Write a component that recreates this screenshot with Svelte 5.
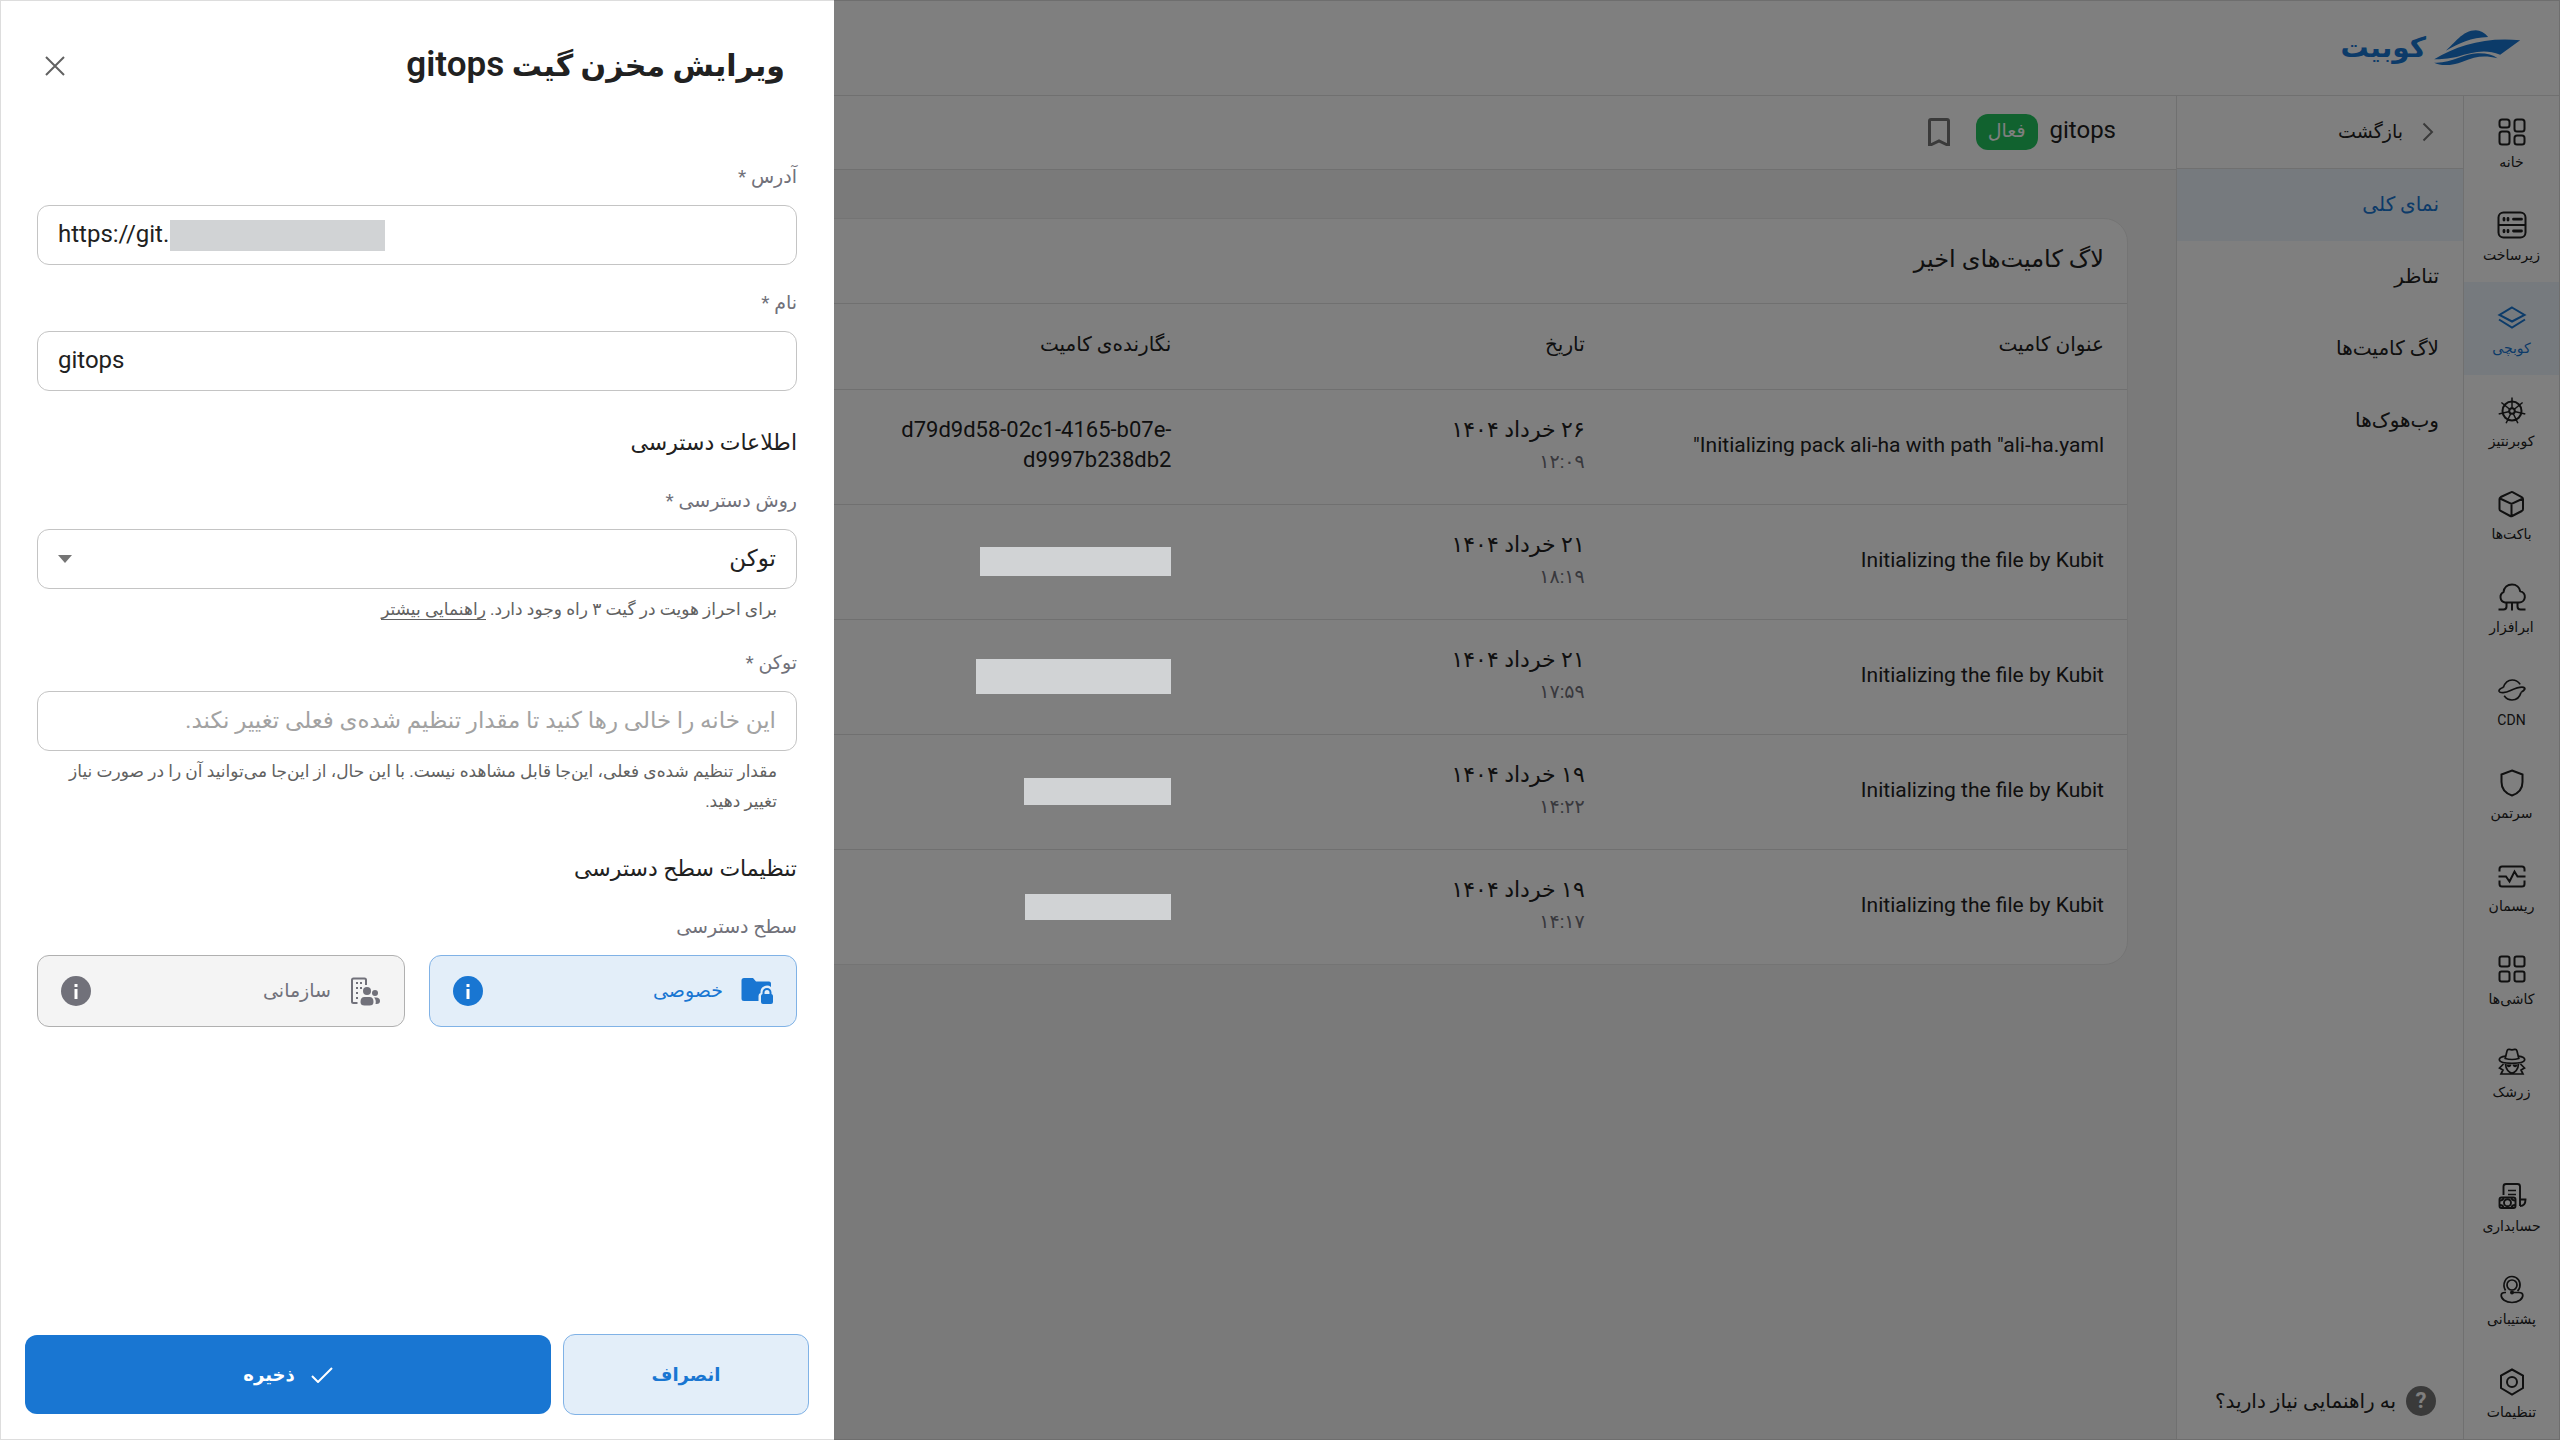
<script>
  const rail = [
    { label: 'خانه', icon: '<rect x="2.5" y="2.5" width="10" height="8" rx="2.5"/><rect x="17.5" y="2.5" width="10" height="12" rx="2.5"/><rect x="2.5" y="14.5" width="10" height="13" rx="2.5"/><rect x="17.5" y="18.5" width="10" height="9" rx="2.5"/>' },
    { label: 'زیرساخت', icon: '<rect x="1.5" y="2.5" width="27" height="25" rx="5"/><path d="M1.5 15h27"/><g stroke-linecap="round"><path d="M7 8.5v1.5M11 8.5v1.5M16.500 9.200h8M7 20.300v1.500M11 20.300v1.500M16.500 21h8" stroke-width="2.800"/></g>' },
    { label: 'کوبچی', active: true, icon: '<path d="M15 4.500 27.500 12 15 18.500 2.500 12zM2 16.500l13 8 13-8"/>' },
    { label: 'کوبرنتیز', icon: '<circle cx="15" cy="15" r="9.500"/><circle cx="15" cy="15" r="2.800"/><path stroke-width="1.500" d="M15 12.500V1.500M17 13.500l8.600-7M17.500 15.600l10.800 2.500M16.100 17.300l4.800 10M13.900 17.300l-4.800 10M12.500 15.600 1.700 18.100M13 13.500 4.400 6.500"/>' },
    { label: 'باکت‌ها', icon: '<path d="M14.300 3.200 3.800 8Q2.500 8.800 2.500 10v10q0 1.300 1.200 2l9.500 5q1 .5 2 0l9.600-5q1.200-.700 1.200-2V10q0-1.200-1.300-2L15.500 3.200q-.6-.3-1.200 0zM3 9.500 14.500 15 26 9.500M14.500 15v12"/>' },
    { label: 'ابرافزار', icon: '<path stroke-linejoin="round" d="M8 20.500a5.500 5.500 0 0 1-1.500-10.300C7 5.500 10.500 2.500 15 2.500s7.500 3 8.200 6.700A5.700 5.700 0 0 1 22 20.500zM15 20.500v8M9.500 20.500v4q0 3-3 3H1.500M20.500 20.500v4q0 3 3 3h5"/>' },
    { label: 'CDN', icon: '<g stroke-width="1.700"><path d="M6.300 12.500C8 7.500 11.200 5 15.200 5c3.400 0 6.200 1.600 8 4.400M24 17.500c-1.200 4.500-4.800 7.500-9 7.500-3.200 0-6-1.600-7.800-4.200"/><path d="M6.500 12.300c-3 1-5 2.700-4.400 4 1 2 6 1.700 11.400-.8 4.500-2 9.500-4 13-3.200 2.600.8 1.400 3.400-2.500 5M26.500 12.300c1.600.9 1.200 2.600-1.500 4.200"/></g>' },
    { label: 'سرتمن', icon: '<path d="M15 2.500 25.500 6.500V14c0 7-4.500 11.500-10.500 13.500C9 25.500 4.500 21 4.500 14V6.500z"/>' },
    { label: 'ریسمان', icon: '<path d="M2.500 10.500V8q0-2.500 2.500-2.500h20q2.500 0 2.500 2.500v2.500M2.500 19.500V23q0 2.500 2.500 2.500h20q2.500 0 2.500-2.500v-3.500M1.500 15.500h7.500l3.500 5 5-10 3 5h8"/>' },
    { label: 'کاشی‌ها', icon: '<rect x="2.500" y="2.500" width="10" height="10" rx="2"/><rect x="17.500" y="2.500" width="10" height="10" rx="2"/><rect x="2.500" y="17.500" width="10" height="10" rx="2"/><rect x="17.500" y="17.500" width="10" height="10" rx="2"/>' },
    { label: 'زرشک', icon: '<g stroke-width="1.700"><path d="M8.200 11.500 10 4q.5-2 2.300-1.600 2.700.8 5.400 0Q19.500 2 20 4l1.800 7.500q-6.800 2-13.600 0z"/><path d="M8.700 9.200C5 9.700 2.300 11 2.300 12.500 2.300 15 8 16.300 15 16.300s12.700-1.300 12.700-3.800c0-1.500-2.700-2.800-6.400-3.300"/><path d="M8.500 17c.3 5.500 3.500 9 6.500 9s6.200-3.500 6.500-9M6.500 17l-4 4 3.500 2-2 4h22l-2-4 3.500-2-4-4"/></g><path fill="currentColor" stroke="none" d="M9 17.500h5.300v1q-.8 1.700-2.300 1.700-1.800 0-3-2.700zM21 17.500h-5.300v1q.8 1.700 2.300 1.700 1.800 0 3-2.700z"/>' },
  ];

  const railBottom = [
    { label: 'حسابداری', icon: '<g stroke-width="1.900"><path d="M6.500 14V5.500Q6.500 3 9 3h11.500q2.500 0 2.500 2.500V25M23 18.500h5.500q0 6.500-5.500 6.500"/><path stroke-width="1.500" d="M11 9.500h8M11 13.500h8"/><rect x="2.500" y="16.500" width="16" height="10.500" rx="2"/><circle cx="10.500" cy="21.700" r="3.500"/><path d="M6.500 16.500q0 3-4 3M14.500 16.500q0 3 4 3M6.500 27q0-3-4-3M14.500 27q0-3 4-3"/></g>' },
    { label: 'پشتیبانی', icon: '<g stroke-width="1.700"><circle cx="15" cy="11" r="5"/><path d="M8.500 16.500C4.800 10 8.500 2.500 15 2.500c5.500 0 9 5 7.800 10.500-.4 1.700-1.200 3-2.300 4"/><path d="M15 18.500h7q3.500 0 3.800 2.500c.2 4-4.500 7.500-10.800 7.500S4 25 4.200 21Q4.500 18.500 8 18.500h1"/></g><circle cx="15" cy="18.500" r="2" fill="currentColor" stroke="none"/>' },
    { label: 'تنظیمات', icon: '<path d="M15 2.500 26 8.500v12.500L15 27.500 4 21V8.500z"/><circle cx="15" cy="15" r="5"/>' },
  ];

  const menu = [
    { label: 'نمای کلی', active: true },
    { label: 'تناظر' },
    { label: 'لاگ کامیت‌ها' },
    { label: 'وب‌هوک‌ها' },
  ];

  const commits = [
    { title: 'Initializing pack ali-ha with path "ali-ha.yaml"', date: '۲۶ خرداد ۱۴۰۴', time: '۱۲:۰۹', author: 'd79d9d58-02c1-4165-b07e-d9997b238db2' },
    { title: 'Initializing the file by Kubit', date: '۲۱ خرداد ۱۴۰۴', time: '۱۸:۱۹', mask: [191, 29] },
    { title: 'Initializing the file by Kubit', date: '۲۱ خرداد ۱۴۰۴', time: '۱۷:۵۹', mask: [195, 35] },
    { title: 'Initializing the file by Kubit', date: '۱۹ خرداد ۱۴۰۴', time: '۱۴:۲۲', mask: [147, 27] },
    { title: 'Initializing the file by Kubit', date: '۱۹ خرداد ۱۴۰۴', time: '۱۴:۱۷', mask: [146, 26] },
  ];

  let url = $state('https://git.');
  let name = $state('gitops');
  let method = $state('token');
  let token = $state('');
  let access = $state('private');
</script>

{#snippet railItem(item)}
  <a href="#top" class="rail-item" class:active={item.active}>
    <svg viewBox="0 0 30 30" aria-hidden="true">{@html item.icon}</svg>
    <span>{item.label}</span>
  </a>
{/snippet}

{#snippet info()}
  <svg class="info" viewBox="0 0 30 30" aria-hidden="true">
    <circle cx="15" cy="15" r="15" fill="currentColor" />
    <path d="M13.500 13h3v10h-3zM13.500 8h3v3h-3z" fill="#fff" />
  </svg>
{/snippet}

<div class="app" dir="rtl" lang="fa">
  <header class="topbar">
    <a href="#top" class="brand">
      <svg viewBox="0 0 260 114" aria-hidden="true">
        <path d="M35 65C60 45 85 4 125 4q20 0 37 20C110 26 75 42 35 65z" />
        <path d="M0 91C70 50 150 24 258 34L198 77C150 58 110 72 70 83 40 90 20 90 0 91z" />
        <path d="M0 101C50 104 90 74 130 73q40-1 60 15C150 78 125 82 85 98 55 110 20 112 0 101z" />
      </svg>
      <span>کوبیت</span>
    </a>
  </header>

  <div class="body">
    <nav class="rail" aria-label="سرویس‌ها">
      {#each rail as item}{@render railItem(item)}{/each}
      <div class="spacer"></div>
      {#each railBottom as item}{@render railItem(item)}{/each}
    </nav>

    <nav class="side" aria-label="مخزن">
      <a href="#top" class="back">
        <svg viewBox="0 0 12 20" aria-hidden="true"><path d="M1.500 1.500 10 10l-8.500 8.500" /></svg>
        <span>بازگشت</span>
      </a>
      {#each menu as item}
        <a href="#top" class="side-item" class:active={item.active}>{item.label}</a>
      {/each}
      <div class="spacer"></div>
      <a href="#top" class="help">
        <span class="q">?</span>
        <span>به راهنمایی نیاز دارید؟</span>
      </a>
    </nav>

    <main>
      <div class="subbar">
        <h1>gitops</h1>
        <span class="badge">فعال</span>
        <button class="bookmark" aria-label="نشان کردن">
          <svg viewBox="0 0 22 28"><path d="M3 1.500h16q1.500 0 1.500 1.500v23.500h-2L11 23l-7.500 3.500h-2V3Q1.500 1.500 3 1.500z" /></svg>
        </button>
      </div>

      <div class="content">
        <section class="card">
          <h2>لاگ کامیت‌های اخیر</h2>
          <table>
            <thead>
              <tr>
                <th class="c-title">عنوان کامیت</th>
                <th class="c-date">تاریخ</th>
                <th class="c-author">نگارنده‌ی کامیت</th>
                <td></td>
              </tr>
            </thead>
            <tbody>
              {#each commits as c}
                <tr>
                  <td class="title">{c.title}</td>
                  <td><div class="date">{c.date}</div><div class="time">{c.time}</div></td>
                  <td class="author">
                    {#if c.mask}
                      <span class="mask" style="width: {c.mask[0]}px; height: {c.mask[1]}px"></span>
                    {:else}
                      {c.author}
                    {/if}
                  </td>
                  <td></td>
                </tr>
              {/each}
            </tbody>
          </table>
        </section>
      </div>
    </main>
  </div>

  <div class="overlay"></div>

  <form class="drawer" aria-labelledby="drawer-title">
    <div class="drawer-head">
      <h2 id="drawer-title">ویرایش مخزن گیت <span>gitops</span></h2>
      <button type="button" class="close" aria-label="بستن">
        <svg viewBox="0 0 20 20"><path d="M1 1l18 18M19 1 1 19" /></svg>
      </button>
    </div>

    <div class="fields">
      <div class="field">
        <label for="url">آدرس *</label>
        <div class="box ltr">
          <input id="url" class="short" dir="ltr" bind:value={url} />
          <span class="mask url-mask"></span>
        </div>
      </div>

      <div class="field">
        <label for="name">نام *</label>
        <div class="box ltr"><input id="name" dir="ltr" bind:value={name} /></div>
      </div>

      <h3>اطلاعات دسترسی</h3>

      <div class="field">
        <label for="method">روش دسترسی *</label>
        <div class="box">
          <select id="method" bind:value={method}><option value="token">توکن</option></select>
          <svg class="caret" viewBox="0 0 14 8" aria-hidden="true"><path d="M0 0h14L7 8z" /></svg>
        </div>
        <p>برای احراز هویت در گیت ۳ راه وجود دارد. <a href="#top">راهنمایی بیشتر</a></p>
      </div>

      <div class="field">
        <label for="token">توکن *</label>
        <div class="box">
          <input id="token" bind:value={token} placeholder="این خانه را خالی رها کنید تا مقدار تنظیم شده‌ی فعلی تغییر نکند." />
        </div>
        <p>مقدار تنظیم شده‌ی فعلی، این‌جا قابل مشاهده نیست. با این حال، از این‌جا می‌توانید آن را در صورت نیاز تغییر دهید.</p>
      </div>

      <h3>تنظیمات سطح دسترسی</h3>

      <fieldset>
        <legend>سطح دسترسی</legend>
        <div class="choices">
          <label class="choice" class:on={access === 'private'}>
            <input type="radio" name="access" value="private" bind:group={access} />
            <svg class="kind" viewBox="0 0 32 30" aria-hidden="true">
              <path fill="currentColor" d="M3 2h9l3 3.500h13q2 0 2 2v3.500a6.500 6.500 0 0 0-10.500 5v1q-2 .5-2 3V25H3q-2.500 0-2.500-2.500v-18Q.500 2 3 2z" />
              <path fill="currentColor" fill-rule="evenodd" d="M21.500 18v-1.500a4.500 4.500 0 0 1 9 0V18q1.500.3 1.500 2v6q0 2-2 2h-8q-2 0-2-2v-6q0-1.700 1.500-2zm2 0h5v-1.500a2.500 2.500 0 0 0-5 0z" />
            </svg>
            <span>خصوصی</span>
            {@render info()}
          </label>
          <label class="choice" class:on={access === 'org'}>
            <input type="radio" name="access" value="org" bind:group={access} />
            <svg class="kind" viewBox="0 0 32 30" aria-hidden="true">
              <path fill="none" stroke="currentColor" stroke-width="2" d="M8.500 27H4.500q-1.500 0-1.500-1.500V4q0-1.500 1.500-1.500h11Q17 2.500 17 4v5" />
              <path fill="currentColor" d="M7 6h2v2H7zM11 6h2v2h-2zM7 11h2v2H7zM11 11h2v2h-2zM7 16h2v2H7zM7 21h2v2H7z" />
              <circle cx="18" cy="15" r="4" fill="currentColor" />
              <circle cx="26" cy="17" r="3" fill="currentColor" />
              <path fill="currentColor" d="M11.500 26q0-5 4-5h5q4 0 4 5 0 3.500-4 3.500h-5q-4 0-4-3.500zM25 21.500h2q4 0 4 3.500t-4.500 3q1-4-1.500-6.500z" />
            </svg>
            <span>سازمانی</span>
            {@render info()}
          </label>
        </div>
      </fieldset>
    </div>

    <div class="actions">
      <button type="button" class="cancel">انصراف</button>
      <button type="button" class="save">
        <svg viewBox="0 0 22 16" aria-hidden="true"><path d="M1 9l6 6L21 1" /></svg>
        <span>ذخیره</span>
      </button>
    </div>
  </form>
</div>

<style>
  :global(body) { background: #f5f5f5; }
  .app, .app :global(*) { box-sizing: border-box; }
  .app {
    min-height: 100vh;
    display: flex;
    flex-direction: column;
    border: 1px solid #ddd;
    color: #212121;
    font-family: Roboto, "DejaVu Sans", sans-serif;
    font-size: 20px;
    line-height: 30px;
  }
  h1, h2, h3, p { margin: 0; font-weight: 500; }
  a { color: inherit; text-decoration: none; }
  button, input, select { font: inherit; color: inherit; }
  button { cursor: pointer; }

  .topbar {
    height: 95px;
    padding: 0 38px;
    display: flex;
    align-items: center;
    background: #fff;
    border-bottom: 1px solid #e0e0e0;
  }
  .brand { display: flex; align-items: center; gap: 8px; color: #1976d2; }
  .brand svg { width: 87px; height: 38px; fill: currentColor; }
  .brand span { font-size: 28px; line-height: 48px; font-weight: 700; }

  .body { flex: 1; display: flex; }
  .rail {
    width: 96px;
    display: flex;
    flex-direction: column;
    background: #fff;
    border-left: 1px solid #e0e0e0;
  }
  .rail-item {
    height: 93px;
    padding-top: 21px;
    display: flex;
    flex-direction: column;
    align-items: center;
    gap: 3px;
    font-size: 14px;
    line-height: 24px;
  }
  .rail-item svg { width: 30px; height: 30px; fill: none; stroke: currentColor; stroke-width: 2; }
  .rail-item.active, .side-item.active { background: #ecf5fd; color: #1976d2; }
  .spacer { flex: 1; }

  .side {
    width: 287px;
    display: flex;
    flex-direction: column;
    background: #fff;
    border-left: 1px solid #e0e0e0;
    font-size: 20px;
  }
  .back {
    height: 73px;
    padding: 0 29px;
    display: flex;
    align-items: center;
    gap: 19px;
    border-bottom: 1px solid #e0e0e0;
    font-size: 19px;
  }
  .back svg { width: 12px; height: 20px; fill: none; stroke: #757575; stroke-width: 2; }
  .side-item { height: 72px; padding: 0 24px 2px; display: flex; align-items: center; }
  .help { padding: 23px 27px; display: flex; align-items: center; gap: 10px; }
  .q {
    width: 30px;
    height: 30px;
    border-radius: 50%;
    background: #757575;
    color: #fff;
    font-size: 22px;
    font-weight: 700;
    text-align: center;
  }

  main { flex: 1; min-width: 0; }
  .subbar {
    height: 74px;
    padding: 0 60px 2px;
    display: flex;
    align-items: center;
    background: #fff;
    border-bottom: 1px solid #e0e0e0;
  }
  h1 { padding-bottom: 4px; font-size: 24px; font-weight: 400; }
  .badge {
    height: 36px;
    margin: 0 12px 0 26px;
    padding: 0 12px;
    border-radius: 12px;
    background: #22c55e;
    color: #fff;
    font-size: 19px;
    line-height: 34px;
  }
  .bookmark { padding: 0; border: 0; background: none; display: flex; }
  .bookmark svg { width: 22px; height: 28px; fill: none; stroke: #757575; stroke-width: 3; }

  .content { padding: 48px; }
  .card {
    background: #fff;
    border: 1px solid #e8e8e8;
    border-radius: 24px;
    overflow: hidden;
  }
  .card h2 { padding: 24px 23px 28px; font-size: 24px; line-height: 32px; border-bottom: 1px solid #e0e0e0; }
  table { width: 100%; border-collapse: collapse; table-layout: fixed; }
  th, td { padding: 0 23px 4px; text-align: start; vertical-align: middle; font-weight: 400; }
  thead tr { height: 85px; }
  tbody tr { height: 115px; border-top: 1px solid #e0e0e0; }
  th { font-size: 20px; font-weight: 500; }
  .c-title { width: 25%; }
  .c-date { width: 19.9%; }
  .c-author { width: 20%; }
  .title { font-size: 21px; }
  .date { font-size: 22px; line-height: 34px; }
  .time { font-size: 19px; color: #71717a; }
  .author { font-size: 22px; }
  .mask { display: block; position: relative; z-index: 2; background: #d1d3d5; }
  .author .mask { margin-top: 4px; }

  .overlay { position: fixed; inset: 0; z-index: 1; background: rgba(0, 0, 0, 0.5); }

  .drawer {
    position: fixed;
    z-index: 3;
    left: 0;
    top: 0;
    bottom: 0;
    width: 834px;
    max-width: 100%;
    padding: 0 25px 24px 24px;
    display: flex;
    flex-direction: column;
    background: #fff;
    border: 1px solid #ddd;
    border-right: 0;
  }
  .drawer-head {
    padding: 40px 24px 0 20px;
    display: flex;
    align-items: center;
    justify-content: space-between;
  }
  .drawer-head h2 { font-size: 30px; line-height: 48px; font-weight: 700; }
  .drawer-head h2 span { font-size: 35px; font-weight: 600; }
  .close { padding: 0; border: 0; background: none; display: flex; }
  .close svg { width: 20px; height: 20px; fill: none; stroke: #616161; stroke-width: 2; }

  .fields { flex: 1; padding: 73px 12px 0; display: flex; flex-direction: column; }
  .field { margin-bottom: 24px; }
  .field label, legend {
    display: block;
    margin-bottom: 14px;
    padding: 0;
    font-size: 19px;
    line-height: 28px;
    color: #71717a;
  }
  .box {
    height: 60px;
    padding: 0 20px;
    display: flex;
    align-items: center;
    border: 1px solid #c4c4c4;
    border-radius: 12px;
  }
  .box.ltr { direction: ltr; }
  .box input, select {
    flex: 1;
    min-width: 0;
    padding: 0;
    border: 0;
    outline: 0;
    background: none;
    font-size: 23px;
    line-height: 34px;
    appearance: none;
  }
  .box.ltr input { padding-bottom: 2px; font-size: 24px; }
  .box input::placeholder { color: #a2a2a2; opacity: 1; }
  .box input.short { flex: none; width: 112px; }
  .url-mask { width: 215px; height: 31px; }
  .caret { width: 14px; height: 8px; fill: #757575; }
  .field p { padding: 5px 20px 1px; font-size: 17px; font-weight: 400; color: #616161; }
  .field p a { border-bottom: 1px solid #616161; }
  h3 { padding: 10px 0 26px; font-size: 22px; line-height: 36px; }

  fieldset { margin: 0; padding: 0; border: 0; min-width: 0; }
  .choices { display: grid; grid-template-columns: 1fr 1fr; gap: 24px; }
  .choice {
    height: 72px;
    padding: 0 23px;
    display: flex;
    align-items: center;
    gap: 18px;
    border: 1px solid #b0b0b0;
    border-radius: 12px;
    background: #f4f4f4;
    color: #71717a;
    font-size: 19px;
    cursor: pointer;
  }
  .choice.on { border-color: #80b2e6; background: #e3eef9; color: #1976d2; }
  .choice input { appearance: none; position: absolute; margin: 0; }
  .kind { width: 32px; height: 30px; }
  .choice span { flex: 1; }
  .info { width: 30px; height: 30px; }

  .actions { display: flex; align-items: center; gap: 12px; }
  .actions button {
    height: 79px;
    border: 0;
    border-radius: 12px;
    display: flex;
    align-items: center;
    justify-content: center;
    gap: 16px;
    font-size: 18px;
    font-weight: 700;
  }
  .actions .cancel { width: 246px; height: 81px; border: 1px solid #80b2e6; background: #e3eef9; color: #1976d2; }
  .save { flex: 1; background: #1976d2; color: #fff; }
  .save svg { width: 22px; height: 16px; fill: none; stroke: #fff; stroke-width: 2; }
</style>
